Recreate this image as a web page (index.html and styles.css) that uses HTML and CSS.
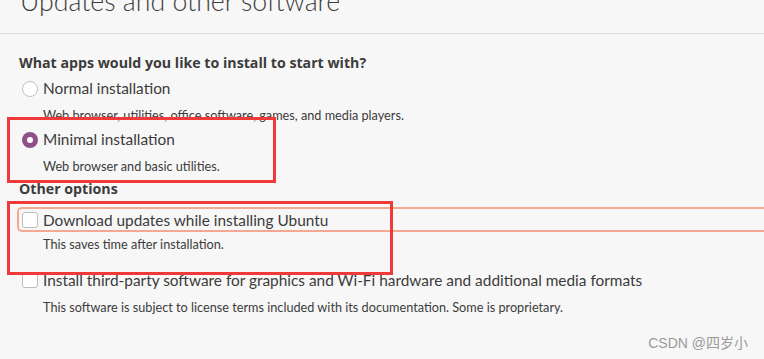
FILE: index.html
```html
<!DOCTYPE html>
<html lang="en">
<head>
  <meta charset="UTF-8" />
  <meta name="viewport" content="width=device-width, initial-scale=1.0"/>
  <title>Updates and other software</title>
  <link rel="stylesheet" href="styles.css">
</head>
<body>

  <div class="header">
    <h1>Updates and other software</h1>
  </div>

  <div class="content">
    <div class="section-title first">What apps would you like to install to start with?</div>

    <div class="option opt-normal">
      <span class="radio"></span>
      <span class="label">Normal installation</span>
    </div>
    <div class="desc">Web browser, utilities, office software, games, and media players.</div>

    <div class="option opt-minimal">
      <span class="radio checked"></span>
      <span class="label">Minimal installation</span>
    </div>
    <div class="desc">Web browser and basic utilities.</div>

    <div class="section-title other">Other options</div>

    <div class="option opt-updates focused">
      <span class="check"></span>
      <span class="label">Download updates while installing Ubuntu</span>
    </div>
    <div class="desc desc-updates">This saves time after installation.</div>

    <div class="option opt-third">
      <span class="check"></span>
      <span class="label">Install third-party software for graphics and Wi-Fi hardware and additional media formats</span>
    </div>
    <div class="desc">This software is subject to license terms included with its documentation. Some is proprietary.</div>
  </div>

  <!-- annotation boxes drawn over the screenshot -->
  <div class="mark mark-one"></div>
  <div class="mark mark-two"></div>

  <div class="watermark">CSDN @四岁小</div>

</body>
</html>
```

FILE: styles.css
```css
body {
  margin: 0;
  padding: 0;
  background-color: #f7f7f7;
  color: #3c3c3c;
  font-family: Lato, 'Noto Sans', sans-serif;
  height: 359px;
  overflow: hidden;
  position: relative;
}

.header {
  height: 33px;
  overflow: hidden;
  border-bottom: 1px solid #dcdcdc;
}

.header h1 {
  margin: -15px 0 0 20px;
  font-size: 26.7px;
  line-height: 32px;
  font-weight: 300;
  color: #3c3c3c;
  white-space: nowrap;
}

.content {
  padding-left: 19px;
}

.section-title {
  font-family: 'Open Sans', 'Noto Sans', sans-serif;
  font-weight: 700;
  font-size: 14.2px;
  line-height: 20px;
  color: #3c3c3c;
}

.section-title.first {
  margin-top: 19px;
}

.section-title.other {
  margin-top: 3px;
}

.option {
  display: flex;
  align-items: center;
  height: 20px;
  padding-left: 3px;
}

.option .label {
  font-size: 15.4px;
  line-height: 20px;
  margin-left: 5px;
  white-space: nowrap;
}

.opt-normal {
  margin-top: 5px;
}

.opt-minimal {
  margin-top: 4px;
}

.opt-updates {
  margin-top: 8px;
}

.opt-third {
  margin-top: 16px;
}

.focused {
  height: 21px;
  margin-left: -2px;
  margin-right: -30px;
  border: 2px solid #f3a891;
  border-right: none;
  border-radius: 5px 0 0 5px;
}

.radio {
  width: 14px;
  height: 14px;
  border: 1px solid #c2c2c2;
  border-radius: 50%;
  background-color: #fff;
  box-sizing: content-box;
  flex-shrink: 0;
  position: relative;
  top: 1px;
}

.radio.checked {
  width: 16px;
  height: 16px;
  border: none;
  background-color: #8f4f8b;
}

.radio.checked::after {
  content: '';
  position: absolute;
  left: 5px;
  top: 5px;
  width: 6px;
  height: 6px;
  border-radius: 50%;
  background-color: #fff;
}

.check {
  width: 14px;
  height: 14px;
  border: 1px solid #bdbdbd;
  border-radius: 3px;
  background-color: #fff;
  flex-shrink: 0;
}

.desc {
  font-size: 12.7px;
  line-height: 20px;
  padding-left: 24px;
  margin-top: 7px;
  white-space: nowrap;
}

.desc-updates {
  margin-top: 2px;
}

.mark {
  position: absolute;
  border: 3px solid #f03a3a;
  box-sizing: border-box;
}

.mark-one {
  left: 7px;
  top: 117px;
  width: 269px;
  height: 66px;
}

.mark-two {
  left: 7px;
  top: 201px;
  width: 386px;
  height: 74px;
}

.watermark {
  position: absolute;
  right: 16px;
  bottom: 7px;
  font-family: 'Liberation Sans', 'Noto Sans CJK SC', sans-serif;
  font-size: 14px;
  color: #9a9a9a;
}
```
